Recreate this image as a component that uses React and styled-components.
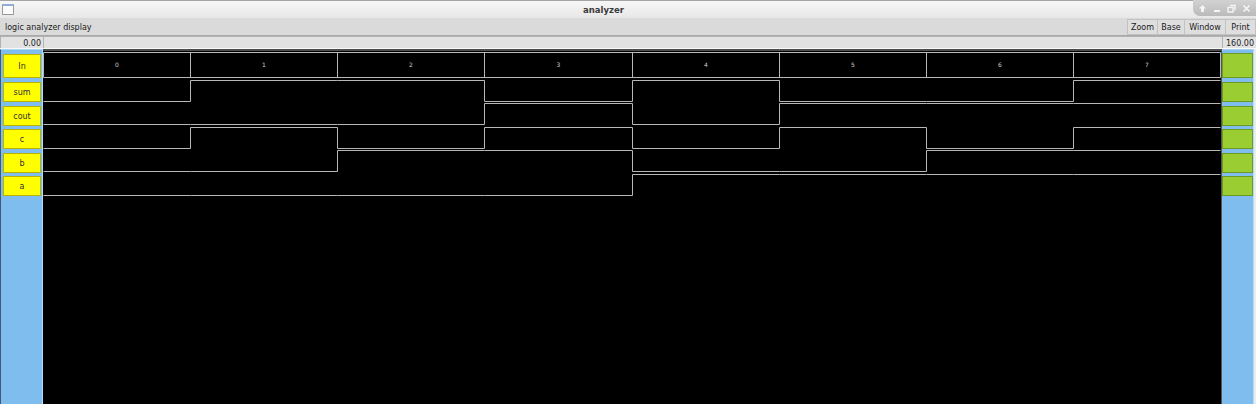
import React from 'react'
import styled, { createGlobalStyle } from 'styled-components'

// analyzer window: title bar, menu row, range row, then the trace panel

const GlobalStyle = createGlobalStyle`
  html, body {
    margin: 0;
    padding: 0;
    background: #dcdcdc;
  }
  body {
    font-family: "DejaVu Sans", "Liberation Sans", sans-serif;
    font-size: 8px;
    color: #222;
  }
`

const Frame = styled.div`
  width: 1256px;
  height: 404px;
  display: flex;
  flex-direction: column;
  overflow: hidden;
  background: #dcdcdc;
`

const TitleBar = styled.div`
  height: 18px;
  flex: none;
  display: flex;
  align-items: flex-start;
  box-sizing: border-box;
  border-top: 1px solid #a4a4a4;
  background: linear-gradient(#f7f7f7, #e7e7e7);
`

const AppIcon = styled.div`
  width: 12px;
  height: 11px;
  margin: 3px 0 0 2px;
  box-sizing: border-box;
  border: 1px solid #9a9a9a;
  border-top: 2px solid #8fb0d4;
  background: #fbfbfb;
`

const Title = styled.div`
  flex: 1;
  text-align: center;
  font-weight: bold;
  font-size: 8.5px;
  line-height: 17px;
  padding-top: 1px;
  color: #3a3a3a;
`

const Controls = styled.div`
  width: 63px;
  height: 16px;
  margin-top: -1px;
  display: flex;
  align-items: center;
  gap: 6px;
  padding-left: 5px;
  box-sizing: border-box;
  border-radius: 0 0 0 7px;
  background: linear-gradient(#d2d2d2, #bababa);
  svg {
    display: block;
  }
`

const MenuBar = styled.div`
  height: 18px;
  flex: none;
  display: flex;
  align-items: center;
  box-sizing: border-box;
  border-bottom: 1px solid #a9a9a9;
  background: #dadada;
`

const Caption = styled.div`
  flex: 1;
  padding: 2px 0 0 5px;
  line-height: 15px;
  color: #202020;
`

const MenuButton = styled.div`
  width: ${p => p.w}px;
  height: 16px;
  box-sizing: border-box;
  display: flex;
  align-items: center;
  justify-content: center;
  padding-top: 2px;
  border: 1px solid #c2c2c2;
  margin-left: -1px;
  background: #dedede;
  color: #202020;
`

const RangeRow = styled.div`
  height: 13px;
  flex: none;
  display: flex;
  box-sizing: border-box;
  border-bottom: 1px solid #fafafa;
`

const RangeBox = styled.div`
  width: ${p => (p.w ? `${p.w}px` : 'auto')};
  flex: ${p => (p.w ? 'none' : 1)};
  box-sizing: border-box;
  border-top: 1px solid #b2b2b2;
  border-left: 1px solid #b2b2b2;
  background: #e2e2e2;
  text-align: right;
  padding: 1px 2px 0 0;
  line-height: 11px;
  color: #222;
`

const Main = styled.div`
  flex: 1;
  display: flex;
  padding-right: 2px;
  background: #ececec;
`

const SideColumn = styled.div`
  width: ${p => p.w}px;
  flex: none;
  box-sizing: border-box;
  display: flex;
  flex-direction: column;
  gap: 3.5px;
  padding: ${p => p.pad};
  border-top: 1px solid #a9d3f6;
  border-left: ${p => (p.left ? '1px solid #3f5a78' : 'none')};
  border-right: 1px solid #b4dbfb;
  background: #80bdef;
`

const SignalLabel = styled.div`
  height: ${p => (p.first ? 24 : 20)}px;
  flex: none;
  box-sizing: border-box;
  display: flex;
  align-items: center;
  justify-content: center;
  padding-top: 1px;
  border: 1px solid #b9b300;
  background: #ffff00;
  color: #303030;
  margin-bottom: ${p => (p.first ? 0.5 : 0)}px;
`

const LevelBox = styled.div`
  height: ${p => (p.first ? 25 : 20)}px;
  flex: none;
  box-sizing: border-box;
  border: 1px solid #6f9a22;
  background: #9acd32;
  margin-bottom: ${p => (p.first ? 0.5 : 0)}px;
`

const Canvas = styled.div`
  width: 1179px;
  flex: none;
  box-sizing: border-box;
  border-top: 2px solid #4d4d4d;
  border-right: 1px solid #555;
  background: #000;
  svg {
    display: block;
  }
`

const signals = [
  { name: 'sum', bits: [0, 1, 1, 0, 1, 0, 0, 1], hi: 29.5 },
  { name: 'cout', bits: [0, 0, 0, 1, 0, 1, 1, 1], hi: 52.5 },
  { name: 'c', bits: [0, 1, 0, 1, 0, 1, 0, 1], hi: 76.5 },
  { name: 'b', bits: [0, 0, 1, 1, 0, 0, 1, 1], hi: 99.5 },
  { name: 'a', bits: [0, 0, 0, 0, 1, 1, 1, 1], hi: 123.5 },
]

const xs = Array.from({ length: 9 }, (_, i) => Math.round(i * 147.125) + 0.5)

function tracePath(bits, hi) {
  const lo = hi + 21
  let d = ''
  bits.forEach((b, i) => {
    const y = b ? hi : lo
    if (i === 0) d += `M${xs[0]} ${y}`
    else d += `V${y}`
    d += `H${xs[i + 1]}`
  })
  return d
}

function Waves() {
  const stroke = '#b8b8b8'
  return (
    <svg width="1178" height="353">
      <path d={`M${xs[0]} 1.5H${xs[8]}M${xs[0]} 26.5H${xs[8]}`} stroke={stroke} fill="none" />
      {xs.map((x, i) => (
        <path key={i} d={`M${x} 1.5V26.5`} stroke={stroke} fill="none" />
      ))}
      {xs.slice(0, 8).map((x, i) => (
        <text
          key={i}
          x={(x + xs[i + 1]) / 2}
          y="16"
          fill="#cfcfcf"
          fontSize="6"
          textAnchor="middle"
          fontFamily="DejaVu Sans, sans-serif"
        >
          {i}
        </text>
      ))}
      {signals.map(s => (
        <path key={s.name} d={tracePath(s.bits, s.hi)} stroke={stroke} fill="none" />
      ))}
    </svg>
  )
}

function WindowButtons() {
  const c = '#f5f5f5'
  return (
    <Controls>
      <svg width="9" height="9" viewBox="0 0 9 9">
        <path d="M4.5 1L8 4.5H6V8H3V4.5H1Z" fill={c} />
      </svg>
      <svg width="8" height="9" viewBox="0 0 8 9">
        <rect x="1" y="6" width="6" height="2" fill={c} />
      </svg>
      <svg width="9" height="9" viewBox="0 0 9 9">
        <path d="M3 1.5h5v5" stroke={c} strokeWidth="1.4" fill="none" />
        <rect x="1" y="3.5" width="5" height="4.5" stroke={c} strokeWidth="1.4" fill="none" />
      </svg>
      <svg width="9" height="9" viewBox="0 0 9 9">
        <path d="M1.5 1.5L7.5 7.5M7.5 1.5L1.5 7.5" stroke={c} strokeWidth="1.6" />
      </svg>
    </Controls>
  )
}

export default function App() {
  const names = ['In', ...signals.map(s => s.name)]
  return (
    <Frame>
      <GlobalStyle />
      <TitleBar>
        <AppIcon />
        <Title>analyzer</Title>
        <WindowButtons />
      </TitleBar>
      <MenuBar>
        <Caption>logic analyzer display</Caption>
        <MenuButton w={31}>Zoom</MenuButton>
        <MenuButton w={28}>Base</MenuButton>
        <MenuButton w={42}>Window</MenuButton>
        <MenuButton w={31}>Print</MenuButton>
      </MenuBar>
      <RangeRow>
        <RangeBox w={43}>0.00</RangeBox>
        <RangeBox />
        <RangeBox w={34}>160.00</RangeBox>
      </RangeRow>
      <Main>
        <SideColumn w={43} left pad="4px 1px 0 2px">
          {names.map((n, i) => (
            <SignalLabel key={n} first={i === 0}>
              {n}
            </SignalLabel>
          ))}
        </SideColumn>
        <Canvas>
          <Waves />
        </Canvas>
        <SideColumn w={32} pad="3px 0 0 0">
          {names.map((n, i) => (
            <LevelBox key={n} first={i === 0} />
          ))}
        </SideColumn>
      </Main>
    </Frame>
  )
}
